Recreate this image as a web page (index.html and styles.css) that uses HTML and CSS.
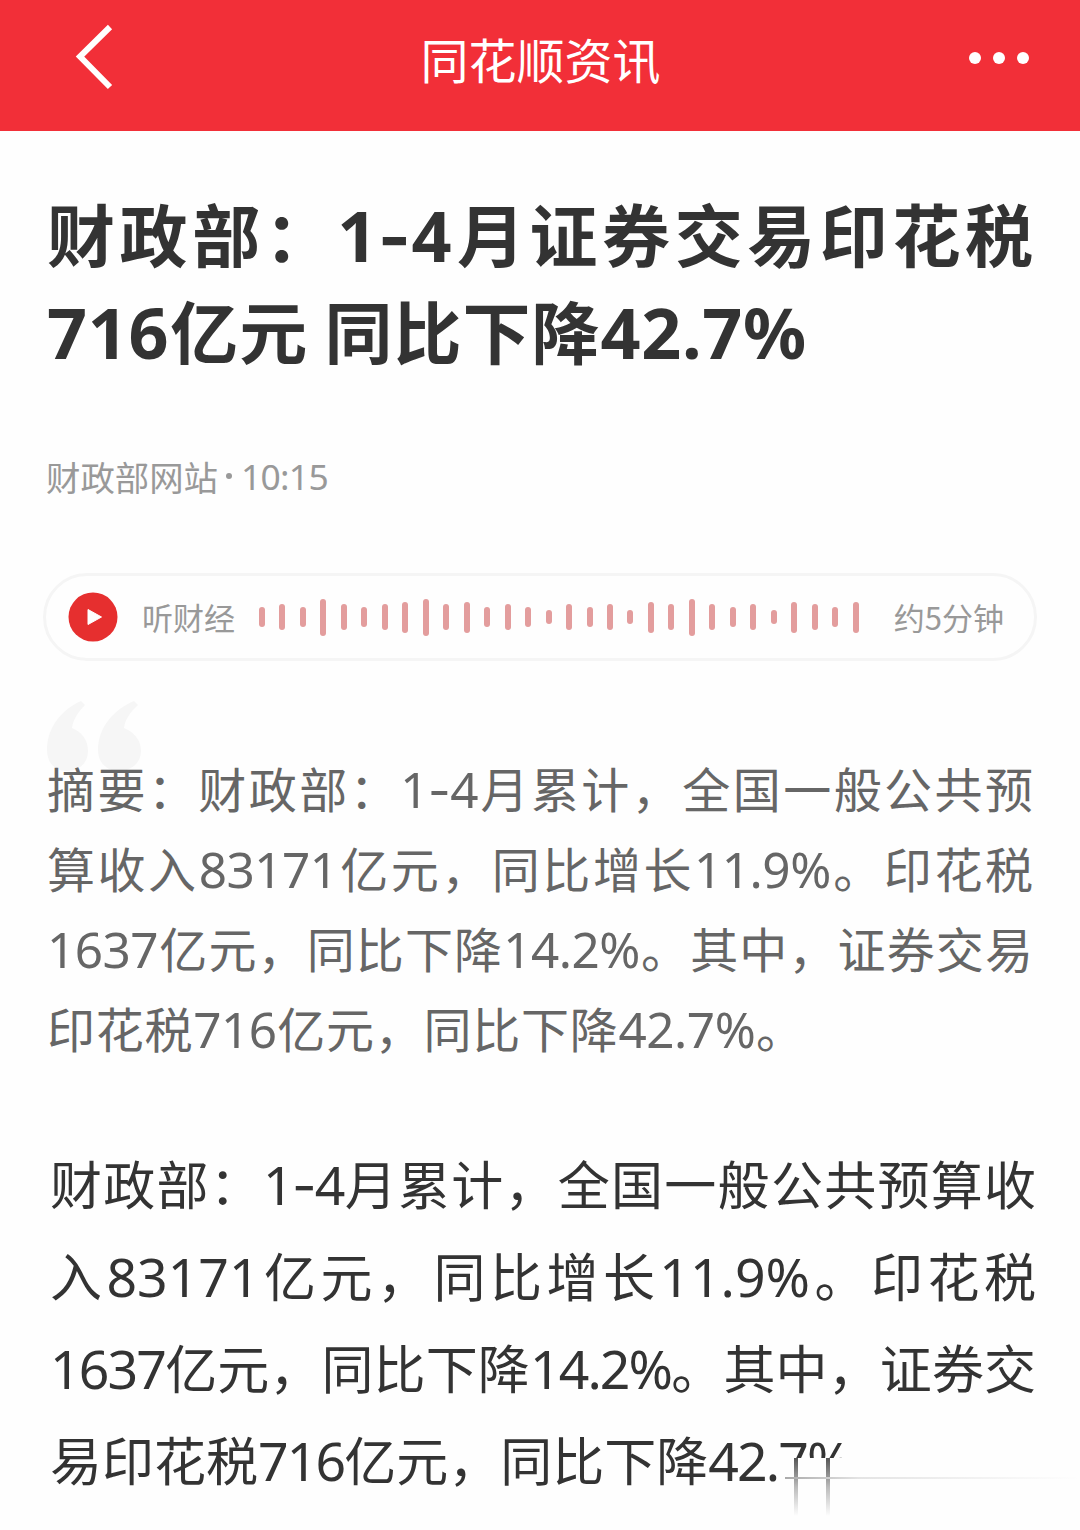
FILE: index.html
```
<!DOCTYPE html>
<html lang="zh-CN">
<head>
    <meta charset="UTF-8">
    <title>同花顺资讯</title>
    <link rel="stylesheet" href="styles.css">
</head>
<body>
    <header class="navbar">
        <svg class="icon-back" width="44" height="70" viewBox="0 0 44 70"><path d="M38 5 L8 34.500 L38 65" /></svg>
        <span class="navbar-title">同花顺资讯</span>
        <svg class="icon-more" width="64" height="16" viewBox="0 0 64 16"><circle cx="8" cy="8" r="6" /><circle cx="32" cy="8" r="6" /><circle cx="56" cy="8" r="6" /></svg>
    </header>

    <main class="article">
        <h1 class="title">
            <span class="line">财政部：<b>1<i class="dash">-</i>4</b>月证券交易印花税</span>
            <span class="line line-last"><b>716</b>亿元 同比下降<b>42.7%</b></span>
        </h1>

        <div class="meta"><span>财政部网站</span><i class="meta-dot"></i><b>10:15</b></div>

        <div class="player">
            <svg class="icon-play" width="50" height="50" viewBox="0 0 50 50"><circle cx="25" cy="25" r="24.500" /><path d="M20 17.500 L33.500 25 L20 32.500 Z" /></svg>
            <span class="player-label">听财经</span>
            <div class="wave">
                <i class="h2"></i><i class="h3"></i><i class="h2"></i><i class="h5"></i><i class="h3"></i><i class="h2"></i>
                <i class="h3"></i><i class="h4"></i><i class="h5"></i><i class="h3"></i><i class="h4"></i><i class="h2"></i>
                <i class="h3"></i><i class="h2"></i><i class="h1"></i><i class="h3"></i><i class="h2"></i><i class="h3"></i>
                <i class="h1"></i><i class="h4"></i><i class="h3"></i><i class="h5"></i><i class="h3"></i><i class="h2"></i>
                <i class="h3"></i><i class="h1"></i><i class="h4"></i><i class="h3"></i><i class="h2"></i><i class="h4"></i>
            </div>
            <span class="player-time">约5分钟</span>
        </div>

        <section class="summary">
            <svg class="icon-quote" width="96" height="72" viewBox="0 0 96 72">
                <path d="M34 1 C14 10 0 28 0 50 C0 63 8 71 20 71 C32 71 41 63 41 51 C41 40 35 32 25 28 C26 20 31 12 38 5 Z" />
                <path d="M87 1 C66 10 51 28 51 50 C51 63 60 71 72 71 C84 71 94 63 94 51 C94 40 87 32 77 28 C78 20 83 12 91 5 Z" />
            </svg>
            <p class="summary-text">
                <span class="line">摘要：财政部：<b>1<i class="dash">-</i>4</b>月累计，全国一般公共预</span>
                <span class="line">算收入<b>83171</b>亿元，同比增长<b>11.9%</b>。印花税</span>
                <span class="line"><b>1637</b>亿元，同比下降<b>14.2%</b>。其中，证券交易</span>
                <span class="line line-last">印花税<b>716</b>亿元，同比下降<b>42.7%</b>。</span>
            </p>
        </section>

        <p class="content">
            <span class="line">财政部：<b>1<i class="dash">-</i>4</b>月累计，全国一般公共预算收</span>
            <span class="line line-loose">入<b>83171</b>亿元，同比增长<b>11.9%</b>。印花税</span>
            <span class="line"><b>1637</b>亿元，同比下降<b>14.2%</b>。其中，证券交</span>
            <span class="line line-last">易印花税<b>716</b>亿元，同比下降<b>42.7%</b><i class="smear"></i></span>
        </p>
    </main>
</body>
</html>
```
FILE: styles.css
```
* { box-sizing: border-box; }
body { margin: 0; height: 1530px; overflow: hidden; background: #fefefe; color: #333; font-family: "Noto Sans CJK SC", sans-serif; text-spacing-trim: space-all; }
b { font-family: "Noto Sans", sans-serif; font-weight: inherit; font-size: 1.03em; line-height: 0; letter-spacing: -0.02em; }
h1, p { margin: 0; }
.line { display: block; white-space: nowrap; text-align: justify; text-align-last: justify; }
.dash { font-family: Inter, sans-serif; font-style: normal; }

.navbar { height: 131px; padding: 0 49px 0 72px; background: #f22f38; display: flex; align-items: flex-start; justify-content: space-between; color: #fff; }
.icon-back { margin-top: 22px; fill: none; stroke: #fff; stroke-width: 6; }
.navbar-title { font-size: 48px; line-height: 70px; margin: 23px 2px 0 0; }
.icon-more { margin-top: 50px; fill: #fff; }

.article { padding: 0 44px; }
.title { margin: 53px 0 0 3px; width: 986px; font-size: 68px; font-weight: 700; line-height: 97px; }
.title b { letter-spacing: 0.01em; }
.title .line-last { width: 760px; }

.meta { margin: 73px 0 0 2px; height: 50px; display: flex; align-items: center; font-size: 34.400px; color: #999; }
.meta-dot { width: 6px; height: 6px; margin: 0 9px 0 8px; border-radius: 50%; background: #999; }

.player { margin: 72px 0 0 -1px; width: 994px; height: 88px; border: 3px solid #f5f5f5; border-radius: 44px; display: flex; align-items: center; padding: 0 30px 0 22px; color: #999; font-size: 31px; }
.icon-play circle { fill: #e62f2f; }
.icon-play path { fill: #fff; stroke: #fff; stroke-linejoin: round; }
.player-label, .player-time { position: relative; top: -1px; }
.player-label { margin-left: 24px; }
.wave { width: 600px; margin-left: 24px; display: flex; align-items: center; justify-content: space-between; }
.wave i { width: 6px; border-radius: 3px; background: #e39d9d; }
.wave .h1 { height: 14px; }
.wave .h2 { height: 20px; }
.wave .h3 { height: 26px; }
.wave .h4 { height: 31px; }
.wave .h5 { height: 37px; }
.player-time { margin-left: auto; }

.summary { position: relative; margin: 86px 0 0 3px; width: 986px; color: #666; }
.icon-quote { position: absolute; left: 0; top: -47px; fill: #f6f6f6; }
.summary-text { position: relative; font-size: 48px; line-height: 80px; }
.summary-text b { letter-spacing: -0.01em; }
.summary-text .line-last { width: 757px; }

.content { margin: 70px 0 0 6px; width: 986px; font-size: 52px; line-height: 92px; }
.content b { letter-spacing: -0.035em; }
.content .line-loose b { letter-spacing: 0; }
.content .line-last { position: relative; width: 792px; }

/* faded-out tail of the last line */
.smear { position: absolute; left: 735px; top: 45px; width: 295px; height: 64px; background:
    linear-gradient(90deg, #aaa, #e4e4e4 25%, transparent) 0 19px / 100% 2px no-repeat,
    linear-gradient(#555, #bbb 50%, transparent) 9px 0 / 4px 58px no-repeat,
    linear-gradient(#555, #bbb 50%, transparent) 41px 0 / 4px 58px no-repeat,
    #fefefe; }
```
